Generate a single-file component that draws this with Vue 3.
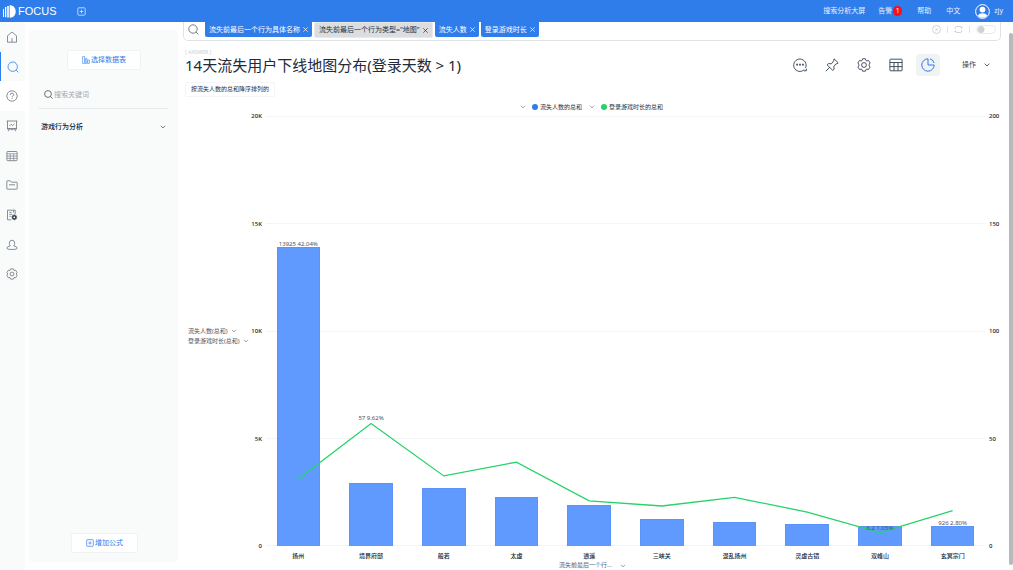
<script setup>
const rail = ['home', 'search', 'help', 'board', 'table', 'folder', 'doc', 'user', 'gear']
const railNames = {
  home: '首页', search: '搜索', help: '帮助', board: '看板', table: '数据表',
  folder: '资源', doc: '任务', user: '用户', gear: '设置'
}
const chips = [
  { text: '流失前最后一个行为具体名称' },
  { text: '流失前最后一个行为类型="地图"', muted: true },
  { text: '流失人数' },
  { text: '登录游戏时长' }
]
const rows = [
  { name: '扬州', count: 13925, hours: 31.2, barLabel: '13925 42.04%' },
  { name: '境界府邸', count: 2950, hours: 57, lineLabel: '57 9.62%' },
  { name: '般若', count: 2700, hours: 32.6 },
  { name: '太虚', count: 2300, hours: 39 },
  { name: '逍遥', count: 1930, hours: 21 },
  { name: '三峡关', count: 1260, hours: 18.6 },
  { name: '混乱扬州', count: 1120, hours: 22.6 },
  { name: '灵虚古镜', count: 1020, hours: 15.8 },
  { name: '双峰山', count: 950, hours: 6.2, lineLabel: '6.2 1.05%' },
  { name: '玄冥宗门', count: 926, hours: 16.4, barLabel: '926 2.80%' }
]
const leftTicks = ['20K', '15K', '10K', '5K', '0']
const rightTicks = ['200', '150', '100', '50', '0']
const maxCount = 20000
const maxHours = 200
const linePoints = rows
  .map((r, i) => `${i * 100 + 50},${(1 - r.hours / maxHours) * 1000}`)
  .join(' ')
</script>

<template>
  <div class="page">
    <header class="topbar">
      <a href="#" class="brand">
        <svg width="13" height="13" viewBox="0 0 13 13" fill="#fff" aria-hidden="true">
          <path d="M0 4h1v8H0zM2 2h1.3v10.3H2zM4.2 1h1.6v11.6H4.2zM6.6.3C10.500 .3 12.700 3 12.700 6.500S10.500 12.700 6.600 12.700z" />
        </svg>
        <span>FOCUS</span>
      </a>
      <button class="plain add" aria-label="新建">
        <svg width="9" height="9" viewBox="0 0 9 9" fill="none" stroke="#b9d3fb" aria-hidden="true">
          <rect x=".8" y=".8" width="7.400" height="7.400" rx="1" /><path d="M4.500 2.700v3.600M2.700 4.500h3.600" />
        </svg>
      </button>
      <nav class="links">
        <a href="#">搜索分析大屏</a>
        <a href="#" class="alert">告警<span class="badge">1</span></a>
        <a href="#">帮助</a>
        <a href="#">中文</a>
        <a href="#" class="me">
          <svg width="15" height="15" viewBox="0 0 15 15" aria-hidden="true">
            <circle cx="7.500" cy="7.500" r="6.900" fill="#2f7ceb" stroke="#fff" />
            <circle cx="7.500" cy="5.600" r="2.900" fill="#fff" />
            <path d="M2.700 11.500q1.500-2.300 4.800-2.300t4.800 2.300q-1.800 2.200-4.800 2.200t-4.800-2.200z" fill="#fff" />
          </svg>
          zjy
        </a>
      </nav>
    </header>

    <div class="body">
      <nav class="rail">
        <a v-for="r in rail" :key="r" href="#" :class="['rail-item', r]" :aria-label="railNames[r]">
          <svg width="12" height="12" viewBox="0 0 12 12" fill="none" stroke="currentColor" stroke-width=".8" aria-hidden="true">
            <path v-if="r === 'home'" d="M1.500 4.800L6 1l4.500 3.800v6.400h-9zM6 7.200v4" />
            <template v-else-if="r === 'search'"><circle cx="5.700" cy="5.700" r="4.700" /><path d="M9.100 9.100l2.300 2.300" /></template>
            <template v-else-if="r === 'help'"><circle cx="6" cy="6" r="5.200" /><path d="M4.300 4.900q0-1.800 1.700-1.800t1.700 1.600q0 .9-1 1.400-.7.400-.7 1.200M6 8.200v.9" /></template>
            <path v-else-if="r === 'board'" d="M.7 1h10.600M1.500 1v7.800h9V1M1 8.800h10M3.500 8.800l-1.200 2.500M8.500 8.800l1.200 2.500M6 8.800v1.600M3.500 5.900l1.600-1.700 1.600 1.400 1.800-1.700" />
            <template v-else-if="r === 'table'"><rect x=".9" y="1.500" width="10.200" height="9.200" rx=".8" /><path d="M.9 3.800h10.200M.9 6.100h10.200M.9 8.400h10.200M4.200 3.800v6.900M7.700 3.800v6.900" stroke-width=".6" /></template>
            <path v-else-if="r === 'folder'" d="M.8 9.700V2.300q0-.5.500-.5h3l1.200 1.400h5.200q.5 0 .5.500v6q0 .5-.5.500H1.300q-.5 0-.5-.5zM3 5.800h6" />
            <template v-else-if="r === 'doc'"><path d="M5.200 10.800H1.500V1.200h7.700v4M3.300 3.300h2.400M3.300 5.300h3M3.300 7.300h1.500M7.500 1.500v2" /><path d="M8.300 5.700l2.300 1.300v2.600l-2.300 1.300L6 9.600V7z" fill="#303b4c" /><circle cx="8.300" cy="8.300" r=".9" fill="#fff" stroke="none" /></template>
            <path v-else-if="r === 'user'" d="M4.300 6.900Q3.300 5.800 3.300 4.100 3.300 1.200 6 1.200t2.700 2.900q0 1.700-1 2.800 3.500.5 3.500 2.400 0 1.200-5.200 1.200T.8 9.300q0-1.900 3.500-2.400z" />
            <template v-else><path d="M4.600.9h2.800l.6 1.500 1.600-.2 1.500 2.400L10.200 6l.9 1.400-1.500 2.400L8 9.600l-.6 1.500H4.600L4 9.600l-1.600.2L.9 7.400 1.800 6 .9 4.600l1.500-2.400 1.600.2z" /><circle cx="6" cy="6" r="1.900" /></template>
          </svg>
        </a>
      </nav>

      <aside class="panel">
        <button class="card-btn">
          <svg width="8" height="8" viewBox="0 0 8 8" fill="none" stroke="currentColor" stroke-width=".6" aria-hidden="true">
            <path d="M.6.6h2v6.800h-2zM3.300 2.600h1.600v4.800H3.300zM5.600 4h1.800v3.400H5.600z" />
          </svg>
          选择数据表
        </button>
        <label class="find">
          <svg width="9" height="9" viewBox="0 0 9 9" fill="none" stroke="#444f60" stroke-width=".8" aria-hidden="true">
            <circle cx="4" cy="4" r="3.400" /><path d="M6.500 6.500l2.100 2.100" />
          </svg>
          <input type="text" placeholder="搜索关键词" aria-label="搜索关键词" />
        </label>
        <button class="plain group">
          游戏行为分析
          <svg width="6" height="4" viewBox="0 0 6 4" fill="none" stroke="#555f6e" stroke-width=".8" aria-hidden="true"><path d="M.8.8L3 3 5.200 .8" /></svg>
        </button>
        <button class="card-btn formula">
          <svg width="8" height="8" viewBox="0 0 8 8" fill="none" stroke="currentColor" stroke-width=".7" aria-hidden="true">
            <rect x=".7" y=".7" width="6.600" height="6.600" rx=".6" /><path d="M4 2.400v3.200M2.400 4h3.200" />
          </svg>
          增加公式
        </button>
      </aside>

      <main class="main">
        <div class="query">
          <svg class="lens" width="11" height="11" viewBox="0 0 11 11" fill="none" stroke="#555f6e" stroke-width=".8" aria-hidden="true">
            <circle cx="5" cy="5" r="4.200" /><path d="M8 8l2.400 2.400" />
          </svg>
          <span v-for="c in chips" :key="c.text" :class="['chip', { muted: c.muted }]">
            {{ c.text }}
            <button class="plain" :aria-label="'移除 ' + c.text">
              <svg width="5" height="5" viewBox="0 0 5 5" fill="none" stroke="currentColor" stroke-width=".7" aria-hidden="true"><path d="M.3.3l4.400 4.400M4.700 .3L.3 4.700" /></svg>
            </button>
          </span>
          <div class="query-tools">
            <button class="plain" aria-label="清空">
              <svg width="9" height="9" viewBox="0 0 9 9" fill="none" stroke="#bcc0c6" stroke-width=".7" aria-hidden="true"><circle cx="4.500" cy="4.500" r="4" /><path d="M3.500 3.500l2 2M5.500 3.500l-2 2" stroke-width="1" /></svg>
            </button>
            <i class="sep"></i>
            <button class="plain" aria-label="刷新">
              <svg width="9" height="9" viewBox="0 0 9 9" fill="none" stroke="#bcc0c6" stroke-width=".7" aria-hidden="true"><path d="M1.300 3.800V3q0-1.500 1.500-1.500h3.400q1.500 0 1.500 1.500M6.600 2.200l1.100 1 1-1M7.700 5.200V6q0 1.500-1.500 1.500H2.800Q1.300 7.500 1.300 6M.3 6.800l1-1 1.100 1" /></svg>
            </button>
            <i class="sep"></i>
            <input type="checkbox" class="switch" aria-label="自动查询" />
          </div>
        </div>

        <div class="heading">
          <div class="titles">
            <span class="tag">[ ANSWER ]</span>
            <h1>14天流失用户下线地图分布(登录天数 &gt; 1)</h1>
          </div>
          <div class="tools">
            <button class="tool" aria-label="评论">
              <svg width="14" height="14" viewBox="0 0 14 14" fill="none" stroke="currentColor" stroke-width=".9" aria-hidden="true"><path d="M11.200 11.700A6.200 6.200 0 1 1 12.500 9.900M11 12.800h2.300v-2.200" /><path d="M3.300 6.600h1.600M6.200 6.600h1.600M9.100 6.600h1.600" stroke-width="1.600" /></svg>
            </button>
            <button class="tool" aria-label="固定">
              <svg width="14" height="14" viewBox="0 0 14 14" fill="none" stroke="currentColor" stroke-width=".9" stroke-linejoin="round" aria-hidden="true"><path d="M9 .8l4.200 4-1.300 1.100-.8-.2-2.300 2.700.3 2.900-1.300 1.100-5.700-5.500L3.300 5.600l3.100.2 2.300-3zM4.800 9.200L.8 13.200" /></svg>
            </button>
            <button class="tool" aria-label="设置">
              <svg width="14" height="14" viewBox="0 0 14 14" fill="none" stroke="currentColor" stroke-width=".9" stroke-linejoin="round" aria-hidden="true"><path d="M5.600.8h2.800l.5 1.500 1 .6 1.600-.4 1.600 2.400-.9 1.300v1.600l.9 1.300-1.600 2.400-1.600-.4-1 .6-.5 1.500H5.600l-.5-1.500-1-.6-1.600.4L.9 9.100l.9-1.300V6.200L.9 4.900l1.600-2.400 1.600.4 1-.6z" /><circle cx="7" cy="7" r="2.400" /></svg>
            </button>
            <button class="tool" aria-label="表格">
              <svg width="14" height="14" viewBox="0 0 14 14" fill="none" stroke="currentColor" stroke-width=".9" aria-hidden="true"><rect x=".9" y="1.200" width="12.200" height="11.600" rx=".5" /><path d="M.9 4.500h12.200M.9 8.600h12.200M5 4.500v8.300M9 4.500v8.300" /></svg>
            </button>
            <button class="tool on" aria-label="图表">
              <svg width="14" height="14" viewBox="0 0 14 14" fill="none" stroke="currentColor" aria-hidden="true"><path d="M7 .8A6.200 6.200 0 1 0 13.200 7H7zM9 .9Q12.300 1.700 13.100 5" /></svg>
            </button>
            <button class="plain ops">
              操作
              <svg width="6" height="4" viewBox="0 0 6 4" fill="none" stroke="currentColor" stroke-width=".8" aria-hidden="true"><path d="M.6.6L3 3 5.400 .6" /></svg>
            </button>
          </div>
        </div>

        <div class="sort-row"><span class="sort">按流失人数的总和降序排列的</span></div>

        <div class="legend">
          <span v-for="(l, i) in ['流失人数的总和', '登录游戏时长的总和']" :key="l" class="legend-item">
            <svg width="6" height="4" viewBox="0 0 6 4" fill="none" stroke="#777" stroke-width=".7" aria-hidden="true"><path d="M1 .8L3 2.900 5 .8" /></svg>
            <i :class="['dot', { green: i === 1 }]"></i>{{ l }}
          </span>
        </div>

        <section class="chart">
          <div class="measures">
            <button v-for="m in ['流失人数(总和)', '登录游戏时长(总和)']" :key="m" class="plain">
              {{ m }}
              <svg width="6" height="4" viewBox="0 0 6 4" fill="none" stroke="#777" stroke-width=".7" aria-hidden="true"><path d="M1 .8L3 2.900 5 .8" /></svg>
            </button>
          </div>
          <div class="ticks left"><span v-for="t in leftTicks" :key="t">{{ t }}</span></div>
          <div class="plot">
            <div class="grid"><i v-for="t in leftTicks" :key="t"></i></div>
            <div class="bars">
              <div v-for="r in rows" :key="r.name" class="slot">
                <div class="bar" :style="{ height: (r.count / maxCount) * 100 + '%' }"></div>
              </div>
            </div>
            <svg class="line" viewBox="0 0 1000 1000" preserveAspectRatio="none" aria-hidden="true">
              <polyline :points="linePoints" fill="none" stroke="#26d367" stroke-width="1.300" vector-effect="non-scaling-stroke" />
            </svg>
            <div class="bars values">
              <div v-for="r in rows" :key="r.name" class="slot">
                <span v-if="r.barLabel" class="value" :style="{ bottom: (r.count / maxCount) * 100 + '%' }">{{ r.barLabel }}</span>
                <span v-if="r.lineLabel" class="value over-line" :style="{ bottom: (r.hours / maxHours) * 100 + '%' }">{{ r.lineLabel }}</span>
              </div>
            </div>
          </div>
          <div class="ticks"><span v-for="t in rightTicks" :key="t">{{ t }}</span></div>
          <div class="names"><span v-for="r in rows" :key="r.name">{{ r.name }}</span></div>
          <button class="plain axis-name">
            流失前最后一个行...
            <svg width="6" height="4" viewBox="0 0 6 4" fill="none" stroke="#777" stroke-width=".7" aria-hidden="true"><path d="M1 .8L3 2.900 5 .8" /></svg>
          </button>
        </section>
      </main>
      <div class="scroll"><i></i></div>
    </div>
  </div>
</template>

<style>
body { margin: 0; background: #fff; }
</style>

<style scoped>
.page {
  display: flex;
  flex-direction: column;
  height: 100vh;
  min-height: 400px;
  overflow: hidden;
  font-family: "Noto Sans", "Noto Sans CJK SC", sans-serif;
  font-size: 7px;
  line-height: 10px;
  color: #26303f;
}
.page * { box-sizing: border-box; }
a { color: inherit; text-decoration: none; }
svg { display: block; flex: none; }
button, input { font: inherit; color: inherit; }
button { cursor: pointer; white-space: nowrap; }
.plain { padding: 0; border: 0; background: none; }

.topbar { display: flex; align-items: center; height: 22px; flex: none; padding: 0 10px 0 3px; background: #2f7ceb; color: #fff; }
.brand { display: flex; align-items: center; gap: 2px; font: 500 11px/14px "Liberation Sans", sans-serif; }
.add { margin-left: 20px; }
.links { display: flex; align-items: center; gap: 15px; margin-left: auto; color: #e8f1fe; }
.alert { display: flex; align-items: center; gap: 1px; margin-left: -2px; }
.badge { width: 9px; height: 10px; border-radius: 5px; background: #fb0d1b; text-align: center; color: #fff; }
.me { display: flex; align-items: center; gap: 4px; }

.body { display: flex; flex: 1; min-height: 0; }
.rail { display: flex; flex-direction: column; width: 25px; flex: none; padding-bottom: 281px; background: #f9fbfb; color: #6a727d; }
.rail-item { display: flex; flex: 1; align-items: center; padding-left: 6px; }
.rail-item.search { padding-left: 7px; box-shadow: inset 1px 0 #2f7ceb; color: #2f7ceb; }
.rail-item.help { background: #fff; }

.panel { display: flex; flex-direction: column; width: 149px; flex: none; margin: 8px 5px 8px 4px; padding: 20px 10px 9px; border-radius: 4px; background: #f9fbfb; }
.card-btn { display: flex; align-items: center; justify-content: center; gap: 1px; width: 74px; height: 20px; flex: none; margin-left: 28px; padding: 0; border: 1px solid #f0f3f3; border-radius: 2px; background: #fff; color: #2f7ceb; }
.find { display: flex; align-items: center; gap: 1px; height: 28px; margin-top: 11px; padding-left: 5px; border-bottom: 1px solid #e6e8ea; }
.find input { width: 100%; min-width: 0; padding: 0; border: 0; outline: 0; background: none; }
.find input::placeholder { color: #a3a8ae; opacity: 1; }
.group { display: flex; align-items: center; justify-content: space-between; height: 20px; margin-top: 8px; padding: 0 2px; font-weight: 500; color: #16202e; }
.formula { width: 67px; margin-top: auto; margin-left: 32px; }

.main { display: flex; flex: 1; flex-direction: column; min-width: 0; }
.query { display: flex; align-items: flex-start; gap: 2px; height: 19px; flex: none; padding-left: 4px; border: 1px solid #dfe3e6; border-top: 0; border-radius: 0 0 5px 5px; }
.lens { margin: 2px 4px 0 0; }
.chip { display: flex; align-items: center; gap: 3px; height: 15px; padding: 0 4px; border-radius: 0 0 2px 2px; background: #2f7ceb; color: #fff; white-space: nowrap; }
.chip.muted { height: 16px; border: 1px solid #e9eaeb; border-radius: 2px; background: #dcdddf; color: #26303f; }
.query-tools { display: flex; align-items: center; gap: 6px; height: 15px; margin-left: auto; padding-right: 4px; }
.sep { width: 1px; height: 7px; background: #dfe1e4; }
.switch { appearance: none; width: 20px; height: 9px; margin: 0; border: 1px solid #e8eaec; border-radius: 5px; background: radial-gradient(circle at 4px 50%, #cfd2d5 3px, transparent 4px); }

.heading { display: flex; align-items: flex-start; justify-content: space-between; height: 38px; flex: none; padding: 7px 11px 0 2px; }
.titles { display: flex; flex-direction: column; padding-top: 1px; }
.tag { font-size: 5px; line-height: 6px; color: #ccd0d4; }
h1 { margin: 0; font-size: 15px; line-height: 20px; font-weight: 400; color: #202a3a; white-space: nowrap; }
.tools { display: flex; align-items: center; gap: 8px; padding-top: 6px; color: #333f50; }
.tool { display: flex; align-items: center; justify-content: center; width: 24px; height: 22px; padding: 0; border: 0; border-radius: 4px; background: none; }
.tool.on { background: #f1f2f3; color: #2f7ceb; }
.ops { display: flex; align-items: center; gap: 8px; margin-left: 14px; }

.sort-row { display: flex; height: 18px; flex: none; padding: 3px 0 0 2px; }
.sort { height: 15px; padding: 0 5px; border: 1px solid #f5f6f7; border-radius: 2px; font-size: 6px; line-height: 13px; }
.legend { display: flex; justify-content: center; gap: 7px; height: 12px; flex: none; margin-top: 4px; padding-right: 1px; font-size: 6px; }
.legend-item { display: flex; align-items: center; gap: 2px; white-space: nowrap; }
.dot { width: 6px; height: 6px; margin-left: 4px; border-radius: 50%; background: #2f7ceb; }
.dot.green { background: #26d367; }

.chart { display: grid; flex: 1; min-height: 0; grid-template-columns: 67px 12px 1fr 20px; grid-template-rows: 1fr 15px 9px; margin-top: 3px; margin-right: -8px; font-size: 6px; }
.measures { display: flex; flex-direction: column; justify-content: center; align-items: flex-start; padding: 10px 0 0 5px; }
.measures button { display: flex; align-items: center; gap: 3px; line-height: 10px; color: #4d5561; }
.ticks { display: flex; flex-direction: column; justify-content: space-between; margin: -5px 0; font-weight: 500; color: #16202e; }
.ticks.left { text-align: right; }
.plot { position: relative; }
.grid { position: absolute; inset: 0; display: flex; flex-direction: column; justify-content: space-between; }
.grid i { height: 1px; margin: 0 4px; background: #f3f4f5; }
.bars { position: absolute; inset: 0; display: grid; grid-template-columns: repeat(10, 1fr); }
.slot { position: relative; display: flex; align-items: flex-end; justify-content: center; }
.bar { width: 60%; background: #619aff; border: 1px solid #5993fb; border-bottom: 0; }
.line { position: absolute; inset: 0; width: 100%; height: 100%; }
.value { position: absolute; left: 0; right: 0; line-height: 6px; text-align: center; color: #4d5561; white-space: nowrap; }
.over-line { padding-bottom: 2px; }
.names { grid-column: 3; display: grid; grid-template-columns: repeat(10, 1fr); padding-top: 5px; text-align: center; font-weight: 500; color: #16202e; white-space: nowrap; }
.axis-name { grid-column: 3; display: flex; align-items: center; justify-content: center; gap: 8px; padding-right: 66px; line-height: 9px; color: #59616c; }
.scroll { width: 12px; flex: none; padding: 11px 0 5px 8px; }
.scroll i { display: block; height: 100%; border-radius: 2px; background: #b8b9bb; }
</style>
